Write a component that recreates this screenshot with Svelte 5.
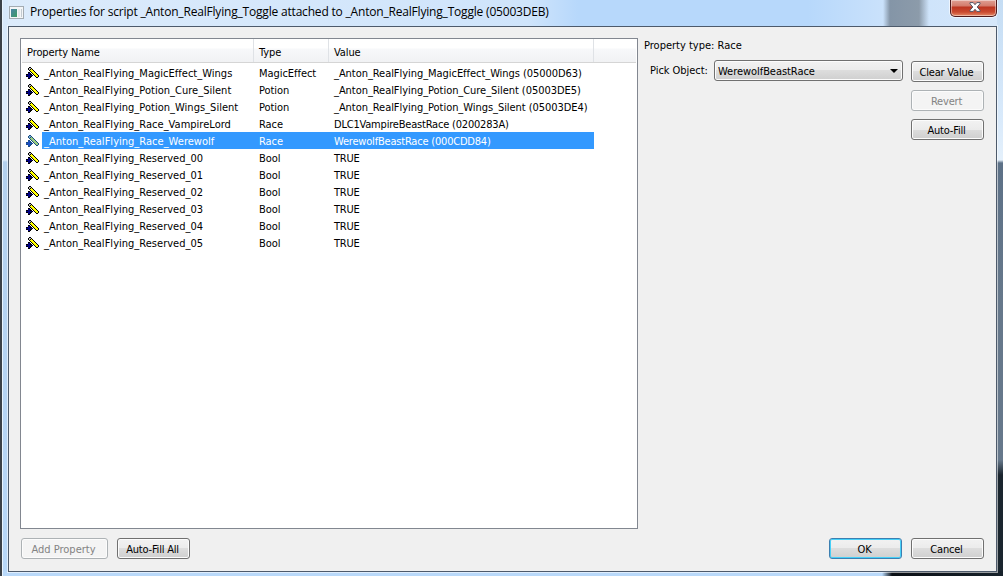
<script>
  const rows = [
    ['_Anton_RealFlying_MagicEffect_Wings', 'MagicEffect', '_Anton_RealFlying_MagicEffect_Wings (05000D63)'],
    ['_Anton_RealFlying_Potion_Cure_Silent', 'Potion', '_Anton_RealFlying_Potion_Cure_Silent (05003DE5)'],
    ['_Anton_RealFlying_Potion_Wings_Silent', 'Potion', '_Anton_RealFlying_Potion_Wings_Silent (05003DE4)'],
    ['_Anton_RealFlying_Race_VampireLord', 'Race', 'DLC1VampireBeastRace (0200283A)'],
    ['_Anton_RealFlying_Race_Werewolf', 'Race', 'WerewolfBeastRace (000CDD84)'],
    ['_Anton_RealFlying_Reserved_00', 'Bool', 'TRUE'],
    ['_Anton_RealFlying_Reserved_01', 'Bool', 'TRUE'],
    ['_Anton_RealFlying_Reserved_02', 'Bool', 'TRUE'],
    ['_Anton_RealFlying_Reserved_03', 'Bool', 'TRUE'],
    ['_Anton_RealFlying_Reserved_04', 'Bool', 'TRUE'],
    ['_Anton_RealFlying_Reserved_05', 'Bool', 'TRUE'],
  ];

  // Wand icon, one character per pixel: k ink, g tip, y stick, n plus.
  const wand = [
    '...kk........',
    '..kggk.......',
    '..kgkyk......',
    '...kyyyk.....',
    '....kyyyk....',
    '..kk.kyyyk...',
    '..nnk.kyyyk..',
    'kknnkk.kyyyk.',
    'nnnnnnk.kyyyk',
    'kknnkk...kyyk',
    '..nnk.....kk.',
    '..kk.........',
  ];
  const pixels = wand.flatMap((line, y) =>
    [...line].map((kind, x) => ({ kind, x, y })).filter((p) => p.kind !== '.')
  );

  let selected = $state(4);
</script>

<div class="window">
  <header class="titlebar">
    <svg class="app-icon" width="15" height="13" viewBox="0 0 15 13">
      <defs>
        <linearGradient id="pane" x1="0" y1="0" x2="1" y2="1">
          <stop offset="0" stop-color="#4a83a8" />
          <stop offset="1" stop-color="#3d9b62" />
        </linearGradient>
      </defs>
      <rect x=".5" y=".5" width="14" height="12" fill="#f4f6f7" stroke="#a3abb2" />
      <rect x="2" y="3" width="6" height="8" fill="url(#pane)" />
      <rect x="9" y="3" width="2" height="8" fill="#e3e7ea" />
      <rect x="12" y="3" width="1" height="8" fill="#c3cad0" />
    </svg>
    <h1>Properties for script _Anton_RealFlying_Toggle attached to _Anton_RealFlying_Toggle (05003DEB)</h1>
    <div class="backdrop"></div>
    <button class="close" aria-label="Close">
      <svg width="12" height="10" viewBox="0 0 12 10">
        <path d="M1 .6h3.2L6 2.7 7.8.6H11v1.2L8.2 5 11 8.2v1.2H7.8L6 7.3 4.2 9.4H1V8.2L3.8 5 1 1.8z" fill="#fff" stroke="#535666" />
      </svg>
    </button>
  </header>

  <main class="client">
    <section class="list-pane">
      <div class="list">
        <div class="cols head">
          <span>Property Name</span>
          <span>Type</span>
          <span>Value</span>
          <span></span>
        </div>
        <div class="rows">
          {#each rows as [name, type, value], i (name)}
            <div class="row" class:selected={i === selected} onclick={() => (selected = i)} role="presentation">
              <svg class="wand" width="13" height="12" viewBox="0 0 13 12" shape-rendering="crispEdges">
                {#each pixels as p}
                  <rect class={p.kind} x={p.x} y={p.y} width="1" height="1" />
                {/each}
              </svg>
              <div class="cells">
                <span class="name">{name}</span>
                <span class="type">{type}</span>
                <span class:form={value.startsWith('_')}>{value}</span>
              </div>
            </div>
          {/each}
        </div>
      </div>
      <div class="actions">
        <button class="btn wide" disabled>Add Property</button>
        <button class="btn">Auto-Fill All</button>
      </div>
    </section>

    <section class="side">
      <p class="kind">Property type: Race</p>
      <div class="editor">
        <span class="label">Pick Object:</span>
        <div class="combo">
          <span>WerewolfBeastRace</span>
          <svg width="8" height="4" viewBox="0 0 8 4"><path d="M0 0h8L4 4z" /></svg>
        </div>
        <div class="stack">
          <button class="btn">Clear Value</button>
          <button class="btn" disabled>Revert</button>
          <button class="btn">Auto-Fill</button>
        </div>
      </div>
      <div class="actions right">
        <button class="btn default">OK</button>
        <button class="btn">Cancel</button>
      </div>
    </section>
  </main>
</div>

<style>
  :global(body) {
    margin: 0;
    overflow: hidden;
  }

  .window {
    box-sizing: border-box;
    width: 1003px;
    height: 576px;
    padding: 0 6px 4px;
    border-left: 2px solid #3b4148;
    background:
      linear-gradient(#e8f4ff, #e8f4ff) 0 0 / 1px 100% no-repeat,
      linear-gradient(90deg, #b9d9fa 0, #b9d9fa 880px, #0b1015 890px, #17222b) 0 100% / 100% 5px no-repeat,
      linear-gradient(#c5ddf4 0, #d9eafb 120px, #e4f0fb 160px, #5d7187 163px, #66788b 300px, #66788b 460px, #1a252e 475px) 100% 0 / 8px 100% no-repeat,
      linear-gradient(#d6e8fb 0, #dfedfb 160px, #b3d0ee 162px, #b7d7f8) 0 0 / 8px 100% no-repeat,
      #b7d8fa;
    color: #000;
    font: 11px/17px 'DejaVu Sans Condensed', 'DejaVu Sans', sans-serif;
    letter-spacing: -0.2px;
  }

  .titlebar {
    position: relative;
    display: flex;
    height: 26px;
    background: linear-gradient(90deg, #dcebfb 0, #cfe4fb 520px, #b7d8fb 570px, #b7d8fb 800px, #cbe2fb 880px, #d5e7fa);
  }

  .app-icon {
    margin: 6px 6px 0 1px;
  }

  h1 {
    margin: 3px 0 0;
    font: 12px/18px 'Open Sans', sans-serif;
    letter-spacing: -0.19px;
    white-space: nowrap;
  }

  .backdrop {
    position: absolute;
    right: 68px;
    width: 46px;
    height: 26px;
    background: linear-gradient(90deg, transparent, #8495a7 7px, #8c9baa 36px, transparent);
  }

  .close {
    box-sizing: border-box;
    position: absolute;
    right: 0;
    top: 0;
    display: flex;
    justify-content: center;
    width: 47px;
    height: 17px;
    padding: 2px 0 0 2px;
    border: 1px solid #4e1a1c;
    border-top: 0;
    border-radius: 0 0 5px 5px;
    background: linear-gradient(#e0a093, #d37b6b 6px, #bd3520 7px, #c94a30 12px, #e58b68);
    box-shadow: inset 0 0 0 1px #ffffff70, 0 0 0 1px #ffffffa0;
  }

  .client {
    box-sizing: border-box;
    display: flex;
    width: 989px;
    height: 546px;
    border: 1px solid #4d5a6b;
    background: #f0f0f0;
    box-shadow: 0 0 0 1px #ffffff90;
  }

  .list-pane {
    padding: 11px 0 0 11px;
  }

  .list {
    box-sizing: border-box;
    width: 618px;
    height: 491px;
    border: 1px solid #828790;
    background: #fff;
  }

  .cols {
    display: grid;
    grid-template-columns: 232px 75px 265px 1fr;
  }

  .head {
    height: 23px;
    margin: 0 1px;
    border-bottom: 1px solid #d5d5d5;
    background: linear-gradient(#fff 9px, #f7f8fa 10px, #f1f2f4);
    line-height: 27px;
    letter-spacing: -0.1px;
  }

  .head span {
    height: 23px;
    padding-left: 5px;
    border-right: 1px solid #dfe2e6;
  }

  .head span:last-child {
    border: 0;
  }

  .rows {
    padding-top: 1px;
  }

  .row {
    display: flex;
    width: 573px;
    height: 17px;
    padding-left: 5px;
    box-sizing: border-box;
    white-space: nowrap;
  }

  .wand {
    margin: 3px 3px 0 0;
  }

  .cells {
    display: grid;
    flex: 1;
    grid-template-columns: 215px 75px 1fr;
    grid-template-rows: 17px;
    padding-left: 2px;
    line-height: 19px;
  }

  .name {
    letter-spacing: 0.02px;
  }

  .type {
    letter-spacing: -0.05px;
  }

  .form {
    letter-spacing: -0.05px;
  }

  .selected .cells {
    background: #3399ff;
    color: #fff;
  }

  .k { fill: #000; }
  .g { fill: #c0c0c0; }
  .y { fill: #ffff00; }
  .n { fill: #000080; }

  .selected .k { fill: #1a4d80; }
  .selected .g { fill: #7aadd8; }
  .selected .y { fill: #99cc80; }
  .selected .n { fill: #1a4dc0; }

  .actions {
    display: flex;
    gap: 9px;
    margin: 9px 0 0 1px;
  }

  .btn {
    box-sizing: border-box;
    width: 73px;
    height: 21px;
    padding: 1px 2px 0 0;
    border: 1px solid #707070;
    border-radius: 3px;
    background: linear-gradient(#f2f2f2, #ebebeb 50%, #dddddd 50%, #cfcfcf);
    box-shadow: inset 0 0 0 1px #fcfcfc;
    color: #000;
    font: inherit;
    letter-spacing: inherit;
  }

  .btn:disabled {
    border-color: #adb2b5;
    background: #f4f4f4;
    color: #838383;
  }

  .btn.wide {
    width: 87px;
    letter-spacing: 0;
  }

  .default {
    border-color: #3c7fb1;
    box-shadow: inset 0 0 0 1px #46d0f8;
  }

  .side {
    display: flex;
    flex: 1;
    flex-direction: column;
    padding: 10px 12px 0 6px;
  }

  .kind {
    margin: 0;
    letter-spacing: 0;
  }

  .editor {
    display: flex;
    flex: 1;
    padding-top: 6px;
  }

  .label {
    width: 64px;
    padding-left: 6px;
    line-height: 22px;
    letter-spacing: -0.05px;
  }

  .combo {
    box-sizing: border-box;
    display: flex;
    align-items: center;
    justify-content: space-between;
    width: 189px;
    height: 21px;
    margin-right: 8px;
    padding: 0 4px 0 3px;
    border: 1px solid #707070;
    border-radius: 3px;
    background: linear-gradient(#f2f2f2, #ebebeb 50%, #dddddd 50%, #cfcfcf);
    box-shadow: inset 0 0 0 1px #fcfcfc;
    letter-spacing: -0.05px;
  }

  .combo span {
    padding-top: 2px;
  }

  .stack {
    display: flex;
    flex-direction: column;
    gap: 8px;
    padding-top: 1px;
  }

  .right {
    justify-content: flex-end;
    margin: 0 0 12px;
  }
</style>
